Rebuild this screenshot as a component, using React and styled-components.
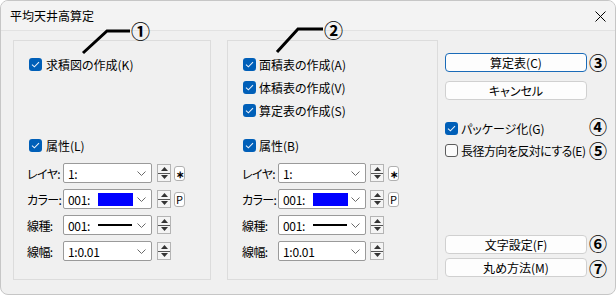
import React from "react";
import styled, { createGlobalStyle } from "styled-components";

const GlobalStyle = createGlobalStyle`
  html, body {
    margin: 0;
    padding: 0;
    background: #ffffff;
  }
  body {
    font-family: "Noto Sans CJK JP", "Noto Sans", sans-serif;
    font-size: 12px;
    color: #000;
    font-feature-settings: "palt";
  }
`;

const Window = styled.div`
  position: relative;
  width: 616px;
  height: 295px;
  box-sizing: border-box;
  border: 1px solid #c6c6c6;
  border-radius: 8px;
  background: #f0f0f0;
  overflow: hidden;
`;

const TitleBar = styled.div`
  height: 30px;
  box-sizing: border-box;
  display: flex;
  align-items: center;
  justify-content: space-between;
  padding: 1px 9px 0 9px;
  background: #f3f3f3;
  border-bottom: 1px solid #e2e2e2;
`;

const Title = styled.span`
  font-size: 12px;
  line-height: 1;
`;

const Body = styled.div`
  display: flex;
  align-items: flex-start;
  padding: 9px 0 0 12px;
`;

const Panel = styled.div`
  width: ${(p) => p.$w}px;
  height: 240px;
  margin-left: ${(p) => p.$ml || 0}px;
  box-sizing: border-box;
  border: 1px solid #dcdcdc;
  display: flex;
  flex-direction: column;
  padding-top: 17px;
`;

const Checks = styled.div`
  display: flex;
  flex-direction: column;
  gap: 10px;
  height: 81px;
  padding-left: 15px;
`;

const AttrCheck = styled.div`
  padding-left: 15px;
`;

const Rows = styled.div`
  display: flex;
  flex-direction: column;
  gap: 6px;
  margin-top: 11px;
  padding-left: ${(p) => p.$pl}px;
`;

const Row = styled.div`
  display: flex;
  align-items: center;
  height: 20px;
`;

const Label = styled.span`
  width: 36px;
  font-size: 12px;
  letter-spacing: -0.6px;
  white-space: nowrap;
`;

const Combo = styled.div`
  width: ${(p) => p.$w}px;
  height: 20px;
  box-sizing: border-box;
  border: 1px solid #9a9a9a;
  border-radius: 2px;
  background: #fff;
  display: flex;
  align-items: center;
  padding: 0 5px 0 4px;
  font-size: 12px;
  letter-spacing: -0.3px;
`;

const ComboText = styled.span`
  width: 30px;
  white-space: nowrap;
`;

const Swatch = styled.span`
  width: 35px;
  height: 13px;
  background: ${(p) => p.$color};
`;

const LineSample = styled.span`
  width: 34px;
  height: 2px;
  background: #000;
`;

const Chevron = styled.svg`
  margin-left: auto;
`;

const Spinner = styled.div`
  width: 14px;
  height: 18px;
  margin-left: ${(p) => p.$ml}px;
  box-sizing: border-box;
  border: 1px solid #b4b4b4;
  background: #f4f4f4;
  display: flex;
  flex-direction: column;
`;

const SpinHalf = styled.div`
  flex: 1;
  display: flex;
  align-items: center;
  justify-content: center;
  border-top: ${(p) => (p.$sep ? "1px solid #555" : "none")};
`;

const MiniButton = styled.div`
  width: 11px;
  height: 15px;
  margin-left: ${(p) => p.$ml}px;
  box-sizing: border-box;
  border: 1px solid #b0b0b0;
  border-radius: 3px;
  background: #fff;
  font-size: ${(p) => p.$fs || 11}px;
  font-weight: ${(p) => p.$fw || 400};
  line-height: 13px;
  text-align: center;
  overflow: hidden;
`;

const CheckRow = styled.label`
  display: flex;
  align-items: center;
  height: 13px;
  gap: ${(p) => (p.$gap != null ? p.$gap : 4)}px;
  font-size: 12px;
  white-space: nowrap;
  letter-spacing: ${(p) => (p.$tight ? "-0.55px" : "0")};
`;

const Box = styled.span`
  width: 13px;
  height: 13px;
  box-sizing: border-box;
  border-radius: 3px;
  flex: none;
  display: flex;
  align-items: center;
  justify-content: center;
  background: ${(p) => (p.$on ? "#005fb8" : "#fbfbfb")};
  border: ${(p) => (p.$on ? "none" : "1px solid #5c5c5c")};
`;

const RightCol = styled.div`
  display: flex;
  flex-direction: column;
  margin-left: 7px;
  padding-top: 13px;
`;

const RightRow = styled.div`
  display: flex;
  align-items: center;
  height: ${(p) => p.$h || 19}px;
  margin-top: ${(p) => p.$mt || 0}px;
`;

const Button = styled.div`
  width: 142px;
  height: 19px;
  box-sizing: border-box;
  border: 1px solid ${(p) => (p.$default ? "#1a6bb8" : "#d0d0d0")};
  border-radius: 4px;
  background: #fdfdfd;
  display: flex;
  align-items: center;
  justify-content: center;
  font-size: 12px;
`;

const Mark = styled.span`
  font-size: 18px;
  font-weight: 700;
  line-height: 15px;
  width: 20px;
  margin-left: ${(p) => p.$ml || 1}px;
  margin-top: ${(p) => p.$mt || 0}px;
  text-align: center;
`;

const CheckCell = styled.div`
  width: 145px;
`;

const Leaders = styled.svg`
  position: absolute;
  left: -1px;
  top: -1px;
  pointer-events: none;
`;

const Callout = styled.span`
  position: absolute;
  top: ${(p) => p.$y}px;
  left: ${(p) => p.$x}px;
  font-size: 19px;
  font-weight: 700;
  line-height: 1;
`;

const CheckIcon = () => (
  <svg width="9" height="7" viewBox="0 0 9 7">
    <polyline
      points="1,3.6 3.4,5.8 8,1.2"
      fill="none"
      stroke="#e8f0fa"
      strokeWidth="1.1"
    />
  </svg>
);

const Check = ({ on = true, children, gap, tight }) => (
  <CheckRow $gap={gap} $tight={tight}>
    <Box $on={on}>{on && <CheckIcon />}</Box>
    <span>{children}</span>
  </CheckRow>
);

const Spin = ({ ml }) => (
  <Spinner $ml={ml}>
    <SpinHalf>
      <svg width="7" height="4" viewBox="0 0 7 4">
        <polygon points="0,4 7,4 3.5,0" fill="#333" />
      </svg>
    </SpinHalf>
    <SpinHalf $sep>
      <svg width="7" height="4" viewBox="0 0 7 4">
        <polygon points="0,0 7,0 3.5,4" fill="#333" />
      </svg>
    </SpinHalf>
  </Spinner>
);

const Select = ({ w, text, children }) => (
  <Combo $w={w}>
    <ComboText>{text}</ComboText>
    {children}
    <Chevron width="9" height="5" viewBox="0 0 9 5">
      <polyline
        points="0.5,0.5 4.5,4.5 8.5,0.5"
        fill="none"
        stroke="#6a6a6a"
        strokeWidth="1"
      />
    </Chevron>
  </Combo>
);

const AttrRows = ({ pl, w, spinGap, btnGap }) => (
  <Rows $pl={pl}>
    <Row>
      <Label>レイヤ:</Label>
      <Select w={w} text="1:" />
      <Spin ml={spinGap} />
      <MiniButton $ml={btnGap} $fs={10} $fw={700}>∗</MiniButton>
    </Row>
    <Row>
      <Label>カラー:</Label>
      <Select w={w} text="001:">
        <Swatch $color="#0000ff" />
      </Select>
      <Spin ml={spinGap} />
      <MiniButton $ml={btnGap}>P</MiniButton>
    </Row>
    <Row>
      <Label>線種:</Label>
      <Select w={w} text="001:">
        <LineSample />
      </Select>
      <Spin ml={spinGap} />
    </Row>
    <Row>
      <Label>線幅:</Label>
      <Select w={w} text="1:0.01" />
      <Spin ml={spinGap} />
    </Row>
  </Rows>
);

const App = () => (
  <>
    <GlobalStyle />
    <Window>
      <TitleBar>
        <Title>平均天井高算定</Title>
        <svg width="11" height="11" viewBox="0 0 11 11">
          <path d="M0.5 0.5 L10.5 10.5 M10.5 0.5 L0.5 10.5" stroke="#000" strokeWidth="1" />
        </svg>
      </TitleBar>
      <Body>
        <Panel $w={198}>
          <Checks>
            <Check>求積図の作成(K)</Check>
          </Checks>
          <AttrCheck>
            <Check>属性(L)</Check>
          </AttrCheck>
          <AttrRows pl={13} w={89} spinGap={5} btnGap={3} />
        </Panel>
        <Panel $w={211} $ml={16}>
          <Checks>
            <Check gap={3}>面積表の作成(A)</Check>
            <Check gap={3}>体積表の作成(V)</Check>
            <Check gap={3}>算定表の作成(S)</Check>
          </Checks>
          <AttrCheck>
            <Check gap={3}>属性(B)</Check>
          </AttrCheck>
          <AttrRows pl={14} w={88} spinGap={4} btnGap={4} />
        </Panel>
        <RightCol>
          <RightRow>
            <Button $default>算定表(C)</Button>
            <Mark>③</Mark>
          </RightRow>
          <RightRow $mt={9}>
            <Button>キャンセル</Button>
          </RightRow>
          <RightRow $mt={22} $h={13}>
            <CheckCell>
              <Check gap={3}>パッケージ化(G)</Check>
            </CheckCell>
            <Mark $ml={-2} $mt={-5}>④</Mark>
          </RightRow>
          <RightRow $mt={9} $h={13}>
            <CheckCell>
              <Check on={false} gap={3} tight>長径方向を反対にする(E)</Check>
            </CheckCell>
            <Mark $ml={-2} $mt={-1}>⑤</Mark>
          </RightRow>
          <RightRow $mt={78}>
            <Button>文字設定(F)</Button>
            <Mark $mt={-2}>⑥</Mark>
          </RightRow>
          <RightRow $mt={4}>
            <Button>丸め方法(M)</Button>
            <Mark $mt={2}>⑦</Mark>
          </RightRow>
        </RightCol>
      </Body>
      <Leaders width="616" height="60" viewBox="0 0 616 60">
        <polyline points="83,53 107,31 130,31" fill="none" stroke="#000" strokeWidth="3" />
        <polyline points="277,52 298,29 323,29" fill="none" stroke="#000" strokeWidth="3" />
      </Leaders>
      <Callout $x={130} $y={20}>①</Callout>
      <Callout $x={323} $y={19}>②</Callout>
    </Window>
  </>
);

export default App;
